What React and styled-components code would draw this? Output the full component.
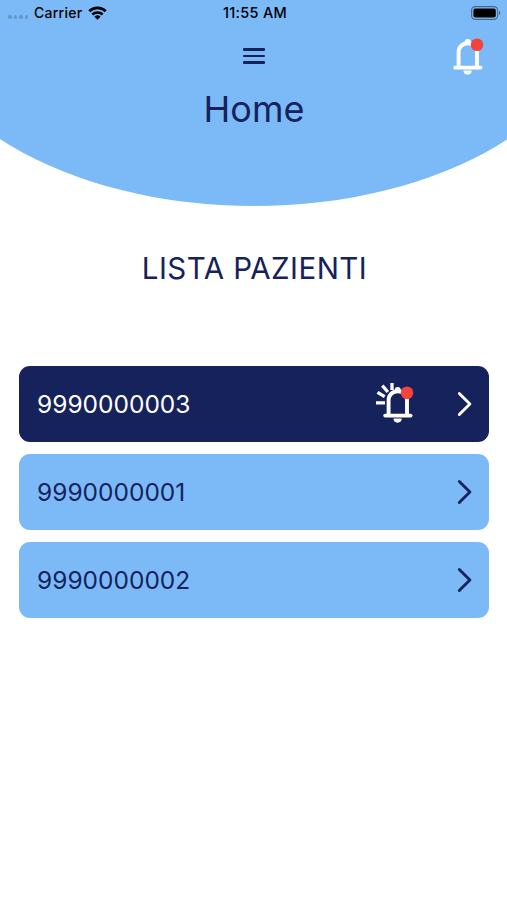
import React from "react";
import styled, { createGlobalStyle } from "styled-components";

const navy = "#16225b";
const sky = "#7cbaf7";

const GlobalStyle = createGlobalStyle`
  * {
    box-sizing: border-box;
  }
  body {
    margin: 0;
    background: #fff;
    font-family: Inter, "Liberation Sans", sans-serif;
    color: ${navy};
  }
`;

const patients = [
  { code: "9990000003", alert: true },
  { code: "9990000001", alert: false },
  { code: "9990000002", alert: false },
];

const Bell = ({ ringing }) => (
  <svg width="44" height="48" viewBox="0 -0.400 44 48" fill="none">
    <path
      d="M14.600 34V20c0-5.500 4-9.200 9.200-9.200s9.200 3.700 9.200 9.200v14"
      stroke="#fff"
      strokeWidth="3.900"
    />
    <path d="M11.200 35.200h25.400" stroke="#fff" strokeWidth="3.800" strokeLinecap="round" />
    <circle cx="23.700" cy="9.600" r="3" fill="#fff" />
    <path d="M19.500 38.200h8.200a4.100 4.100 0 0 1-8.200 0z" fill="#fff" />
    {ringing && (
      <path
        d="M18 2.700V9.500M8.300 5.300l5.600 6.300M3.500 12l7.200 4.300M2 22.500h9"
        stroke="#fff"
        strokeWidth="3.300"
      />
    )}
    <circle cx="33" cy="12.300" r="6.300" fill="#f5423b" />
  </svg>
);

const Chevron = () => (
  <svg width="16" height="26" viewBox="0 0 16 26" fill="none">
    <path
      d="M3.300 2.500L13.900 13L3.300 23.500"
      stroke="currentColor"
      strokeWidth="2.900"
      strokeLinecap="round"
      strokeLinejoin="round"
    />
  </svg>
);

const App = () => {
  return (
    <Page>
      <GlobalStyle />
      <Header>
        <StatusBar>
          <Carrier>
            <Dots>
              <i />
              <i />
              <i />
              <i />
            </Dots>
            <span>Carrier</span>
            <svg width="19" height="14" viewBox="0 0 19 14" fill="none">
              <path d="M1.300 5.200a11.800 11.800 0 0 1 16.400 0" stroke="#000" strokeWidth="2.800" />
              <path d="M4.300 8.500a7.500 7.500 0 0 1 10.400 0" stroke="#000" strokeWidth="2.500" />
              <path d="M9.500 13.800L6.400 10.700a4.500 4.500 0 0 1 6.200 0z" fill="#000" />
            </svg>
          </Carrier>
          <Time>11:55 AM</Time>
          <Battery>
            <svg width="31" height="14" viewBox="0 0 31 14" fill="none">
              <rect x="0.600" y="0.600" width="26" height="12.800" rx="3.600" stroke="#42698f" strokeWidth="1.100" />
              <rect x="2.400" y="2.400" width="22.400" height="9.200" rx="2" fill="#000" />
              <path d="M28 4.800a2.500 2.500 0 0 1 0 4.400z" fill="#42698f" />
            </svg>
          </Battery>
        </StatusBar>
        <Toolbar>
          <MenuButton aria-label="Menu">
            <span />
            <span />
            <span />
          </MenuButton>
          <BellButton aria-label="Notifications">
            <Bell />
          </BellButton>
        </Toolbar>
        <Title>Home</Title>
      </Header>
      <Subtitle>LISTA PAZIENTI</Subtitle>
      <List>
        {patients.map((patient) => (
          <Row key={patient.code} $active={patient.alert}>
            <Code>{patient.code}</Code>
            {patient.alert && <Bell ringing />}
            <Chevron />
          </Row>
        ))}
      </List>
    </Page>
  );
};

const Page = styled.div`
  width: 507px;
  height: 900px;
  overflow: hidden;
  background: #fff;
`;

const Header = styled.header`
  width: 688px;
  height: 206px;
  margin-left: -90px;
  padding: 0 91px 0 90px;
  background: ${sky};
  border-radius: 0 0 50% 50% / 0 0 100% 100%;
`;

const StatusBar = styled.div`
  display: grid;
  grid-template-columns: 1fr auto 1fr;
  align-items: center;
  height: 26px;
  padding: 0 5px 0 8px;
  color: #000;
  font-size: 14px;
  font-weight: 500;
  line-height: 16px;
`;

const Carrier = styled.div`
  display: flex;
  align-items: center;
  gap: 5.500px;
  letter-spacing: 0.3px;
`;

const Dots = styled.div`
  display: flex;
  gap: 2px;
  padding-top: 8px;
  i {
    width: 3.600px;
    height: 3.600px;
    border-radius: 50%;
    background: #6497c9;
  }
`;

const Time = styled.div`
  font-size: 14.500px;
  letter-spacing: 0.3px;
`;

const Battery = styled.div`
  display: flex;
  justify-content: flex-end;
`;

const Toolbar = styled.div`
  display: grid;
  grid-template-columns: 1fr auto 1fr;
  align-items: center;
  height: 60px;
  padding: 0 19px;
`;

const MenuButton = styled.button`
  grid-column: 2;
  display: flex;
  flex-direction: column;
  gap: 4px;
  padding: 0;
  border: 0;
  background: none;
  span {
    width: 22px;
    height: 2.400px;
    border-radius: 1px;
    background: ${navy};
  }
`;

const BellButton = styled.button`
  display: flex;
  justify-self: end;
  padding: 0;
  border: 0;
  background: none;
`;

const Title = styled.h1`
  margin: 0;
  padding-left: 1px;
  font-size: 36px;
  font-weight: 400;
  line-height: 46px;
  text-align: center;
`;

const Subtitle = styled.h2`
  margin: 42px 0 0;
  padding-left: 2px;
  font-size: 29.500px;
  font-weight: 400;
  line-height: 40px;
  letter-spacing: 0.450px;
  text-align: center;
`;

const List = styled.div`
  display: flex;
  flex-direction: column;
  gap: 12px;
  padding: 78px 18px 0 19px;
`;

const Row = styled.div`
  display: flex;
  align-items: center;
  height: 76px;
  padding: 0 17px 0 18px;
  border-radius: 11px;
  background: ${(props) => (props.$active ? navy : sky)};
  color: ${(props) => (props.$active ? "#fff" : navy)};
  svg:last-child {
    margin-left: 38px;
  }
`;

const Code = styled.span`
  flex: 1;
  font-size: 24.500px;
`;

export default App;
